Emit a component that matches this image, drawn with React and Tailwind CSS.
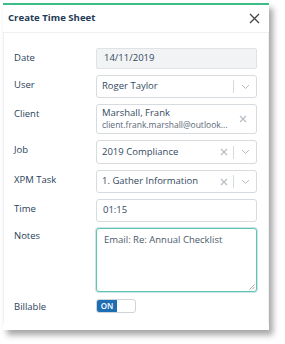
import React from "react";

const Chevron = () => (
  <svg width="9" height="6" viewBox="0 0 9 6" fill="none" stroke="#b5bcc4" strokeWidth="1">
    <path d="M1 1l3.5 3.5L8 1" />
  </svg>
);

const Cross = ({ color = "#b5bcc4" }) => (
  <svg width="8" height="8" viewBox="0 0 8 8" fill="none" stroke={color} strokeWidth="1.1">
    <path d="M1 1l6 6M7 1l-6 6" />
  </svg>
);

const Row = ({ label, children, labelPad = "pt-[3px]" }) => (
  <div className="flex items-start">
    <div className={`w-[82px] shrink-0 text-[9.5px] text-[#2a3f5a] ${labelPad}`}>{label}</div>
    <div className="min-w-0 flex-1">{children}</div>
  </div>
);

const SelectBox = ({ value, clear, h = "h-[23px]" }) => (
  <div className={`flex items-center ${h} rounded-[3px] border border-[#d6dbe0] bg-white pl-[5px]`}>
    <span className="flex-1 truncate text-[9.5px] text-[#34495e]">{value}</span>
    {clear && (
      <span className="px-[5px]">
        <Cross />
      </span>
    )}
    <span className="h-[13px] w-px bg-[#d6dbe0]" />
    <span className="flex w-[22px] justify-center">
      <Chevron />
    </span>
  </div>
);

export default function App() {
  return (
    <div className="h-[344px] w-[285px] bg-white pl-[3px] pt-[3px]" style={{ fontFamily: '"Open Sans", sans-serif' }}>
      <div className="h-[327px] w-[266px] border-t-2 border-[#3cbf87] bg-white shadow-[4px_5px_6px_rgba(0,0,0,0.35)]">
        <div className="flex h-[28px] items-center justify-between border-b border-[#eef0f2] pl-[5px] pr-[9px]">
          <span className="text-[9.6px] font-bold text-[#243a55]">Create Time Sheet</span>
          <svg width="11" height="11" viewBox="0 0 11 11" fill="none" stroke="#444" strokeWidth="1.3">
            <path d="M1 1l9 9M10 1l-9 9" />
          </svg>
        </div>
        <div className="flex flex-col gap-[6px] border-x border-[#f0f1f2] pb-[10px] pl-[10px] pr-[11px] pt-[15px]">
          <Row label="Date">
            <div className="flex h-[21px] items-center rounded-[2px] border border-[#e0e3e6] bg-[#f1f3f4] pl-[7px] text-[9.5px] text-[#34495e]">
              14/11/2019
            </div>
          </Row>
          <Row label="User">
            <SelectBox value="Roger Taylor" />
          </Row>
          <Row label="Client">
            <div className="flex h-[30px] items-center rounded-[3px] border border-[#d6dbe0] bg-white pl-[5px] pr-[9px]">
              <div className="flex min-w-0 flex-1 flex-col leading-[12px]">
                <span className="text-[9.5px] text-[#34495e]">Marshall, Frank</span>
                <span className="truncate text-[8.5px] text-[#5a6878]">client.frank.marshall@outlook...</span>
              </div>
              <span className="pl-[6px]">
                <Cross />
              </span>
            </div>
          </Row>
          <Row label="Job">
            <SelectBox value="2019 Compliance" clear h="h-[24px]" />
          </Row>
          <Row label="XPM Task">
            <SelectBox value="1. Gather Information" clear />
          </Row>
          <Row label="Time">
            <div className="flex h-[23px] items-center rounded-[3px] border border-[#d6dbe0] bg-white pl-[6px] text-[9.5px] text-[#34495e]">
              01:15
            </div>
          </Row>
          <Row label="Notes" labelPad="pt-[1px]">
            <div className="relative h-[64px] rounded-[3px] border border-[#5ec7a6] bg-white px-[7px] pt-[4px] text-[9.5px] text-[#4a5a6a] shadow-[0_0_0_1px_#cfe3f5]">
              Email: Re: Annual Checklist
              <svg className="absolute bottom-[1px] right-[1px]" width="6" height="6" viewBox="0 0 6 6" stroke="#999" strokeWidth="0.8">
                <path d="M0.5 5.5l5-5M3 5.5l2.5-2.5" />
              </svg>
            </div>
          </Row>
          <Row label="Billable" labelPad="pt-[2px]">
            <div className="mt-[1px] flex h-[14px] w-[40px] overflow-hidden rounded-[3px] border border-[#cfd4d9] bg-white">
              <div className="flex w-[20px] items-center justify-center bg-[#1f6db3] text-[8px] font-semibold text-white">
                ON
              </div>
            </div>
          </Row>
        </div>
      </div>
    </div>
  );
}
